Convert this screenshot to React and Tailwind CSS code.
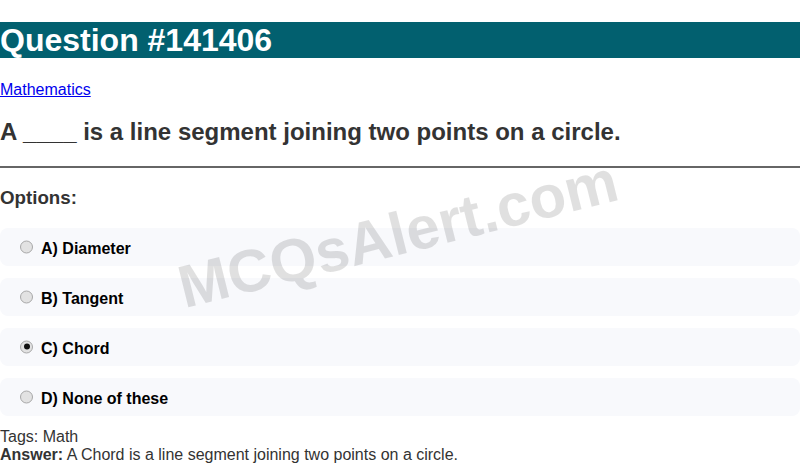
import React from "react";

const options = [
  { id: "a", label: "A) Diameter", checked: false },
  { id: "b", label: "B) Tangent", checked: false },
  { id: "c", label: "C) Chord", checked: true },
  { id: "d", label: "D) None of these", checked: false },
];

export default function App() {
  return (
    <div className="relative min-h-[464px] bg-white pt-[22px] font-['Liberation_Sans',Arial,sans-serif] overflow-hidden">
      <h1 className="bg-[#02606f] text-white text-[32px] font-bold leading-[36px]">
        Question #141406
      </h1>
      <p className="mt-[23px] text-[16px] leading-[18px]">
        <a href="#" className="text-[#0000ee] underline">
          Mathematics
        </a>
      </p>
      <h2 className="mt-[19px] text-[24px] font-bold leading-[28px] text-[#333333]">
        A ____ is a line segment joining two points on a circle.
      </h2>
      <div className="mt-[20px] h-[2px] bg-[#666666]" />
      <h3 className="mt-[19px] text-[18.72px] font-bold leading-[21px] text-[#333333]">
        Options:
      </h3>
      <div className="mt-[20px] flex flex-col gap-3">
        {options.map((o) => (
          <label
            key={o.id}
            className="flex h-[38px] items-center gap-2 rounded-lg bg-[#f8f9fc] px-[20px]"
          >
            <span className="flex h-[13px] w-[13px] shrink-0 -translate-y-[0.5px] items-center justify-center rounded-full border border-[#a8a8a8] bg-[#e2e2e2]">
              {o.checked && <span className="h-[6px] w-[6px] rounded-full bg-[#111111]" />}
            </span>
            <span className="pt-[4px] text-[16px] font-bold text-black">{o.label}</span>
          </label>
        ))}
      </div>
      <p className="mt-[12px] text-[16px] leading-[18px] text-[#333333]">Tags: Math</p>
      <p className="text-[16px] leading-[18px] text-[#333333]">
        <strong>Answer:</strong> A Chord is a line segment joining two points on a circle.
      </p>
      <div className="pointer-events-none absolute left-[398px] top-[234px] -translate-x-1/2 -translate-y-1/2 -rotate-[14deg] whitespace-nowrap text-[60px] font-bold leading-[69px] text-[rgba(0,0,0,0.12)]">
        MCQsAlert.com
      </div>
    </div>
  );
}
